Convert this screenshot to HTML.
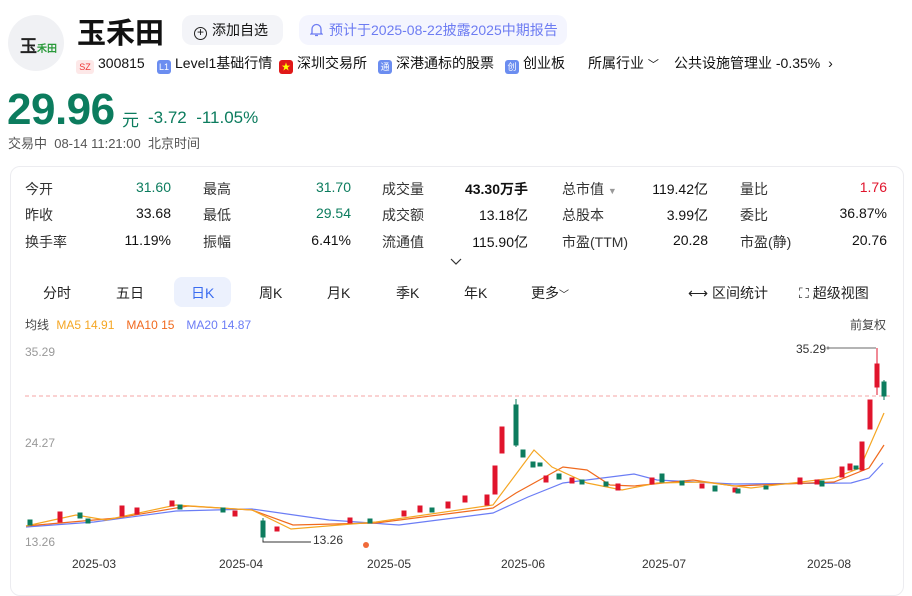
<!DOCTYPE html>
<html><head><meta charset="utf-8"><style>
*{margin:0;padding:0;box-sizing:border-box}
body{width:912px;height:582px;background:#fff;font-family:"Liberation Sans","Noto Sans CJK SC",sans-serif;color:#111;position:relative;overflow:hidden}
.a{position:absolute;white-space:nowrap}
.badge{display:inline-block;width:14px;height:14px;border-radius:3px;font-size:9px;text-align:center;line-height:14px;vertical-align:-2px;margin-right:4px;color:#fff}
.card{position:absolute;left:10px;top:166px;width:894px;height:430px;border:1px solid #ececf0;border-radius:10px}
.lb{position:absolute;font-size:14px;color:#333}
.vl{position:absolute;font-size:14px;text-align:right;width:100px;color:#111}
.tab{position:absolute;top:283px;font-size:14px;color:#222}
</style></head><body>
<div class="a" style="left:8px;top:15px;width:56px;height:56px;border-radius:50%;background:#f0f1f4"></div>
<div class="a" style="left:20px;top:32px;font-family:'Liberation Serif',serif;font-size:17px;font-weight:bold;color:#222">玉<span style="font-size:10px;color:#2a9a3a">禾田</span></div>
<div class="a" style="left:77px;top:10px;font-size:29px;font-weight:bold;color:#111">玉禾田</div>
<div class="a" style="left:182px;top:15px;width:101px;height:30px;background:#f3f4f8;border-radius:10px;font-size:14px;line-height:30px;padding-left:12px"><span style="display:inline-block;width:13px;height:13px;border:1.5px solid #222;border-radius:50%;font-size:12px;line-height:9px;text-align:center;vertical-align:-1px;margin-right:5px">+</span>添加自选</div>
<div class="a" style="left:299px;top:15px;width:268px;height:30px;background:#f4f5fe;border-radius:10px;font-size:14px;line-height:30px;padding-left:11px;color:#6d7cf2"><svg width="13" height="14" viewBox="0 0 13 14" style="vertical-align:-2px;margin-right:6px"><path d="M2 10V6a4.5 4.5 0 0 1 9 0v4l1 1H1zM5 12.5h3" fill="none" stroke="#6d7cf2" stroke-width="1.3"/></svg>预计于2025-08-22披露2025中期报告</div>
<div class="a" style="top:54px;left:76px;font-size:14px;color:#111;line-height:18px">
<span class="badge" style="background:#fde8e8;color:#e33;width:18px">SZ</span>300815
<span style="margin-left:10px" class="badge" >
</span></div>
<div class="a" style="top:54px;left:157px;font-size:14px;line-height:18px"><span class="badge" style="background:#6b8df0">L1</span>Level1基础行情</div>
<div class="a" style="top:54px;left:279px;font-size:14px;line-height:18px"><span class="badge" style="background:#e01818;color:#ff0">★</span>深圳交易所</div>
<div class="a" style="top:54px;left:378px;font-size:14px;line-height:18px"><span class="badge" style="background:#6b8df0">通</span>深港通标的股票</div>
<div class="a" style="top:54px;left:505px;font-size:14px;line-height:18px"><span class="badge" style="background:#6b8df0">创</span>创业板</div>
<div class="a" style="top:54px;left:588px;font-size:14px;line-height:18px">所属行业 <span style="font-size:11px">﹀</span></div>
<div class="a" style="top:54px;left:674px;font-size:14px;line-height:18px">公共设施管理业 -0.35% <span style="margin-left:4px">›</span></div>
<div class="a" style="left:7px;top:85px;font-size:44px;font-weight:bold;color:#0c7c5e;letter-spacing:-0.5px">29.96</div>
<div class="a" style="left:122px;top:106px;font-size:17px;color:#0c7c5e">元</div>
<div class="a" style="left:148px;top:108px;font-size:17px;color:#0c7c5e">-3.72 &nbsp;-11.05%</div>
<div class="a" style="left:8px;top:133px;font-size:13px;color:#555">交易中 &nbsp;08-14 11:21:00 &nbsp;北京时间</div>
<div class="card"></div>
<div class="lb" style="left:25px;top:179px">今开</div><div class="vl" style="left:71px;top:179px;color:#0c7c5e">31.60</div>
<div class="lb" style="left:203px;top:179px">最高</div><div class="vl" style="left:251px;top:179px;color:#0c7c5e">31.70</div>
<div class="lb" style="left:382px;top:179px">成交量</div><div class="vl" style="left:428px;top:179px;font-weight:bold">43.30万手</div>
<div class="lb" style="left:562px;top:179px">总市值 <span style="font-size:9px;color:#999">▼</span></div><div class="vl" style="left:608px;top:179px">119.42亿</div>
<div class="lb" style="left:740px;top:179px">量比</div><div class="vl" style="left:787px;top:179px;color:#e0142c">1.76</div>
<div class="lb" style="left:25px;top:205px">昨收</div><div class="vl" style="left:71px;top:205px">33.68</div>
<div class="lb" style="left:203px;top:205px">最低</div><div class="vl" style="left:251px;top:205px;color:#0c7c5e">29.54</div>
<div class="lb" style="left:382px;top:205px">成交额</div><div class="vl" style="left:428px;top:205px">13.18亿</div>
<div class="lb" style="left:562px;top:205px">总股本</div><div class="vl" style="left:608px;top:205px">3.99亿</div>
<div class="lb" style="left:740px;top:205px">委比</div><div class="vl" style="left:787px;top:205px">36.87%</div>
<div class="lb" style="left:25px;top:232px">换手率</div><div class="vl" style="left:71px;top:232px">11.19%</div>
<div class="lb" style="left:203px;top:232px">振幅</div><div class="vl" style="left:251px;top:232px">6.41%</div>
<div class="lb" style="left:382px;top:232px">流通值</div><div class="vl" style="left:428px;top:232px">115.90亿</div>
<div class="lb" style="left:562px;top:232px">市盈(TTM)</div><div class="vl" style="left:608px;top:232px">20.28</div>
<div class="lb" style="left:740px;top:232px">市盈(静)</div><div class="vl" style="left:787px;top:232px">20.76</div>
<svg class="a" style="left:450px;top:258px" width="12" height="8"><path d="M1 1l5 5 5-5" fill="none" stroke="#333" stroke-width="1.2"/></svg>
<div class="a" style="left:174px;top:277px;width:57px;height:30px;background:#ecf1fd;border-radius:8px"></div>
<div class="tab" style="left:43px">分时</div><div class="tab" style="left:116px">五日</div><div class="tab" style="left:191px;color:#3a6cf0">日K</div>
<div class="tab" style="left:259px">周K</div><div class="tab" style="left:327px">月K</div><div class="tab" style="left:396px">季K</div><div class="tab" style="left:464px">年K</div><div class="tab" style="left:531px">更多<span style="font-size:10px">﹀</span></div>
<div class="tab" style="left:688px">⟷ 区间统计</div>
<div class="tab" style="left:799px">⛶ 超级视图</div>
<div class="a" style="left:25px;top:316px;font-size:12px;color:#444">均线 <span style="color:#f5a623;margin-left:4px">MA5 14.91</span><span style="color:#f06a1e;margin-left:12px">MA10 15</span><span style="color:#6b7df5;margin-left:12px">MA20 14.87</span></div>
<div class="a" style="left:850px;top:316px;font-size:12px;color:#444">前复权</div>
<div class="a" style="left:25px;top:345px;font-size:12px;color:#999">35.29</div>
<div class="a" style="left:25px;top:436px;font-size:12px;color:#999">24.27</div>
<div class="a" style="left:25px;top:535px;font-size:12px;color:#999">13.26</div>
<div class="a" style="left:796px;top:342px;font-size:12px;color:#333">35.29</div>
<div class="a" style="left:313px;top:533px;font-size:12px;color:#333">13.26</div>
<svg class="a" style="left:0;top:0" width="912" height="582">
<line x1="25" y1="396" x2="890" y2="396" stroke="#f4a6a6" stroke-dasharray="4,3"/>
<path d="M828 348H876" stroke="#888" stroke-width="1.3"/><circle cx="828" cy="348" r="1.5" fill="#888"/>
<path d="M263 537V542H311" stroke="#333" fill="none"/>
<circle cx="366" cy="545" r="3" fill="#f06a3a"/>
<polyline fill="none" stroke="#6b7df5" stroke-width="1.2" points="26,527 94,522 176,511 252,509 329,520 399,525 493,513 528,497 563,483 634,474 657,480 734,484 851,483 869,478 883,463"/>
<polyline fill="none" stroke="#f06a1e" stroke-width="1.2" points="26,526 117,518 188,506 252,510 293,525 376,523 493,508 516,493 563,467 587,470 610,485 634,486 693,480 734,486 834,482 869,468 884,445"/>
<polyline fill="none" stroke="#f5a623" stroke-width="1.2" points="26,526 76,515 106,520 176,505 252,510 291,529 376,522 493,505 534,450 552,467 587,483 622,490 657,483 704,482 751,488 834,478 860,468 884,413"/>
<g stroke-width="1">
<g fill="#e0142c" stroke="#e0142c">
<rect x="58" y="512" width="4" height="10"/><rect x="120" y="506" width="4" height="10"/><rect x="135" y="508" width="4" height="6"/><rect x="170" y="501" width="4" height="5"/>
<rect x="233" y="511" width="4" height="5"/><rect x="275" y="527" width="4" height="4"/><rect x="348" y="518" width="4" height="5"/><rect x="402" y="511" width="4" height="5"/>
<rect x="418" y="506" width="4" height="6"/><rect x="446" y="502" width="4" height="6"/><rect x="463" y="496" width="4" height="6"/><rect x="485" y="495" width="4" height="10"/>
<rect x="493" y="466" width="4" height="28"/><rect x="500" y="427" width="4" height="26"/>
<rect x="544" y="476" width="4" height="6"/><rect x="570" y="478" width="4" height="5"/><rect x="616" y="484" width="4" height="6"/><rect x="650" y="478" width="4" height="6"/>
<rect x="700" y="484" width="4" height="4"/><rect x="733" y="488" width="4" height="4"/><rect x="798" y="478" width="4" height="6"/><rect x="815" y="480" width="4" height="4"/>
<rect x="840" y="467" width="4" height="10"/><rect x="848" y="464" width="4" height="6"/><rect x="860" y="442" width="4" height="28"/><rect x="868" y="400" width="4" height="29"/>
<rect x="875" y="364" width="4" height="23"/><line x1="877" y1="348" x2="877" y2="395"/>
</g>
<g fill="#0c7c5e" stroke="#0c7c5e">
<rect x="28" y="520" width="4" height="5"/><rect x="78" y="513" width="4" height="5"/><rect x="86" y="519" width="4" height="4"/><rect x="178" y="505" width="4" height="4"/>
<rect x="221" y="508" width="4" height="4"/><rect x="261" y="521" width="4" height="16"/><line x1="263" y1="518" x2="263" y2="540"/>
<rect x="368" y="519" width="4" height="4"/><rect x="430" y="508" width="4" height="4"/>
<rect x="514" y="405" width="4" height="40"/><line x1="516" y1="399" x2="516" y2="447"/><rect x="521" y="450" width="4" height="7"/>
<rect x="531" y="462" width="4" height="5"/><rect x="538" y="463" width="4" height="3"/><rect x="557" y="474" width="4" height="5"/><rect x="580" y="480" width="4" height="4"/>
<rect x="604" y="482" width="4" height="4"/><rect x="660" y="474" width="4" height="8"/><rect x="680" y="481" width="4" height="4"/><rect x="713" y="486" width="4" height="5"/>
<rect x="736" y="489" width="4" height="4"/><rect x="764" y="486" width="4" height="3"/><rect x="820" y="481" width="4" height="5"/><rect x="854" y="466" width="4" height="3"/>
<rect x="882" y="382" width="4" height="14"/><line x1="884" y1="380" x2="884" y2="400"/>
</g></g>
</svg>
<div class="a" style="left:72px;top:557px;font-size:12px;color:#333">2025-03</div>
<div class="a" style="left:219px;top:557px;font-size:12px;color:#333">2025-04</div>
<div class="a" style="left:367px;top:557px;font-size:12px;color:#333">2025-05</div>
<div class="a" style="left:501px;top:557px;font-size:12px;color:#333">2025-06</div>
<div class="a" style="left:642px;top:557px;font-size:12px;color:#333">2025-07</div>
<div class="a" style="left:807px;top:557px;font-size:12px;color:#333">2025-08</div>
</body></html>
